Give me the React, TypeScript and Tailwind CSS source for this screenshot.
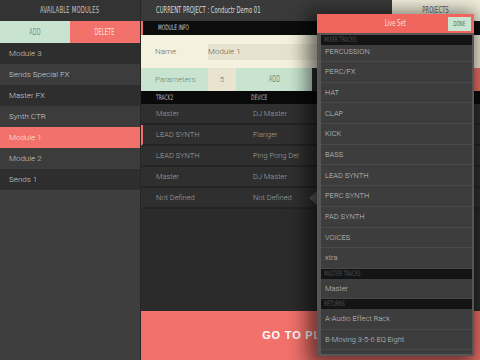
import React from "react";

const cond = "font-['DejaVu_Sans_Condensed','Liberation_Sans_Narrow',sans-serif]";
const body = "font-['Roboto','Liberation_Sans',sans-serif] font-light";

// narrow display text, squeezed horizontally like the condensed UI face
function Narrow({ children, left = false }: { children: React.ReactNode; left?: boolean }) {
  return (
    <span className={`inline-block whitespace-nowrap scale-x-[0.65] ${left ? "origin-left" : "origin-center"}`}>
      {children}
    </span>
  );
}

const modules = [
  { name: "Module 3", cls: "bg-[#2e2e2e] text-[#cfcfcf]" },
  { name: "Sends Special FX", cls: "bg-[#3c3c3c] text-[#cfcfcf]" },
  { name: "Master FX", cls: "bg-[#2e2e2e] text-[#cfcfcf]" },
  { name: "Synth CTR", cls: "bg-[#3c3c3c] text-[#cfcfcf]" },
  { name: "Module 1", cls: "bg-[#f2716b] text-[#fbe9e6]" },
  { name: "Module 2", cls: "bg-[#3c3c3c] text-[#cfcfcf]" },
  { name: "Sends 1", cls: "bg-[#2e2e2e] text-[#cfcfcf]" },
];

const tracks = [
  { track: "Master", device: "DJ Master", mark: false },
  { track: "LEAD SYNTH", device: "Flanger", mark: true },
  { track: "LEAD SYNTH", device: "Ping Pong Del", mark: false },
  { track: "Master", device: "DJ Master", mark: false },
  { track: "Not Defined", device: "Not Defined", mark: false },
];

const mixer = ["PERCUSSION", "PERC/FX", "HAT", "CLAP", "KICK", "BASS", "LEAD SYNTH", "PERC SYNTH", "PAD SYNTH", "VOICES", "xtra"];

function Section({ title }: { title: string }) {
  return (
    <div className={`h-[10px] shrink-0 bg-[#141414] pl-[3px] flex items-center text-[7.5px] uppercase text-[#4e4e4e] ${cond}`}>
      <Narrow left>{title}</Narrow>
    </div>
  );
}

function Item({ label, cls = "h-[20.7px]" }: { label: string; cls?: string }) {
  return (
    <div className={`${cls} shrink-0 flex items-center pl-[4px] border-b border-[#4a4a4a] text-[7.5px] text-[#c4c4c4] ${body}`}>
      {label}
    </div>
  );
}

export default function App() {
  return (
    <div className="relative w-[480px] h-[360px] flex overflow-hidden bg-[#2b2b2b]">
      {/* Available modules */}
      <aside className="w-[141px] shrink-0 flex flex-col bg-[#3e3e3e] border-r border-[#262626]">
        <div className={`h-[21px] shrink-0 flex items-center justify-center bg-[#333333] text-[9px] tracking-[0.3px] text-[#c4c4c4] ${cond}`}>
          <Narrow>AVAILABLE MODULES</Narrow>
        </div>
        <div className={`h-[22px] shrink-0 flex text-[8.5px] tracking-[0.3px] ${cond}`}>
          <div className="w-[70px] flex items-center justify-center bg-[#c8e4d1] text-[#6f9380]"><Narrow>ADD</Narrow></div>
          <div className="flex-1 flex items-center justify-center bg-[#f2716b] text-[#fbe3dc]"><Narrow>DELETE</Narrow></div>
        </div>
        {modules.map((m) => (
          <div key={m.name} className={`h-[21px] shrink-0 flex items-center pl-[9px] text-[8px] ${body} ${m.cls}`}>
            {m.name}
          </div>
        ))}
      </aside>

      {/* Current project */}
      <main className="flex-1 flex flex-col">
        <div className="h-[21px] shrink-0 flex">
          <div className={`flex-1 flex items-center pl-[15px] bg-[#3a3a3a] text-[9px] text-[#dcdcdc] ${cond}`}>
            <Narrow left>CURRENT PROJECT : Conductr Demo 01</Narrow>
          </div>
          <div className={`w-[88px] flex items-center justify-center bg-[#f2efdc] text-[8.5px] tracking-[0.4px] text-[#555555] ${cond}`}>
            <Narrow>PROJECTS</Narrow>
          </div>
        </div>
        <div className={`h-[14px] shrink-0 flex items-center pl-[15px] bg-[#0c0c0c] border-l-2 border-[#f2716b] text-[7.5px] text-[#cfcfcf] ${cond}`}>
          <Narrow left>MODULE INFO</Narrow>
        </div>
        <div className={`h-[33px] shrink-0 flex items-center bg-[#f4f1de] text-[8px] text-[#6a6a5e] ${body}`}>
          <div className="w-[67px] pl-[14px]">Name</div>
          <div className="w-[250px] h-[16px] flex items-center bg-[#e7e3d0] text-[#5f5f55]">Module 1</div>
        </div>
        <div className={`h-[23px] shrink-0 flex text-[8px] ${body}`}>
          <div className="w-[67px] flex items-center pl-[14px] bg-[#c8e3cf] text-[#6d8a78]">Parameters</div>
          <div className="w-[28px] flex items-center justify-center bg-[#e8e4d0] text-[#6a6a5e]">5</div>
          <div className={`w-[76px] flex items-center justify-center bg-[#c8e3cf] text-[8px] tracking-[0.3px] text-[#6d8a78] ${cond}`}>
            <Narrow>ADD</Narrow>
          </div>
          <div className="flex-1 bg-[#2b2b2b]" />
          <div className="w-[70px] bg-[#f2716b]" />
        </div>
        <div className={`h-[13px] shrink-0 flex items-center bg-[#0a0a0a] text-[7.5px] text-[#bcbcbc] ${cond}`}>
          <div className="w-[110px] pl-[15px]"><Narrow left>TRACK2</Narrow></div>
          <div><Narrow left>DEVICE</Narrow></div>
        </div>
        {tracks.map((t, i) => (
          <div
            key={i}
            className={`h-[21px] shrink-0 flex items-center bg-[#2f2f2f] border-b-2 border-[#242424] text-[7.5px] text-[#a3a3a3] ${body} ${t.mark ? "border-l-2 border-l-[#f2716b]" : "border-l-2 border-l-[#2f2f2f]"}`}
          >
            <div className="w-[110px] pl-[13px]">{t.track}</div>
            <div>{t.device}</div>
          </div>
        ))}
        <div className="flex-1 bg-[#2b2b2b]" />
        <div className="h-[49px] shrink-0 flex items-center justify-center pl-[18px] bg-[#f2716b] font-['Liberation_Sans',sans-serif] font-bold text-[11px] tracking-[0.8px] text-white">
          GO TO PLAY MODE
        </div>
      </main>

      {/* Popover arrow */}
      <div className="absolute left-[309px] top-[190px] w-0 h-0 border-y-[8px] border-y-transparent border-r-[9px] border-r-[#5a5a5a]" />

      {/* Live Set popover */}
      <div className="absolute left-[317px] top-[14px] w-[157px] h-[342px] flex flex-col bg-[#565656] shadow-[-4px_4px_18px_6px_rgba(0,0,0,0.55)]">
        <div className="h-[19px] shrink-0 relative flex items-center justify-center bg-[#f0665f]">
          <span className={`text-[9px] text-[#f8e2d8] ${cond}`}><Narrow>Live Set</Narrow></span>
          <div className={`absolute right-[3px] top-[3px] w-[23px] h-[14px] flex items-center justify-center bg-[#c8e4d1] text-[7px] text-[#4e6a5a] ${cond}`}>
            <Narrow>DONE</Narrow>
          </div>
        </div>
        <div className="flex-1 flex flex-col pl-[4px] pr-[2px] pt-[2px] pb-[2px]">
          <div className="flex-1 flex flex-col bg-[#3d3d3d] overflow-hidden">
            <Section title="Mixer Tracks" />
            {mixer.map((m, i) => (
              <Item key={m} label={m} cls={i === 0 ? "h-[17px] pb-[3px]" : "h-[20.7px]"} />
            ))}
            <Section title="Master Tracks" />
            <Item label="Master" cls="h-[20px]" />
            <Section title="Returns" />
            <Item label="A-Audio Effect Rack" />
            <Item label="B-Moving 3-5-6 EQ Eight" />
          </div>
        </div>
      </div>
    </div>
  );
}
